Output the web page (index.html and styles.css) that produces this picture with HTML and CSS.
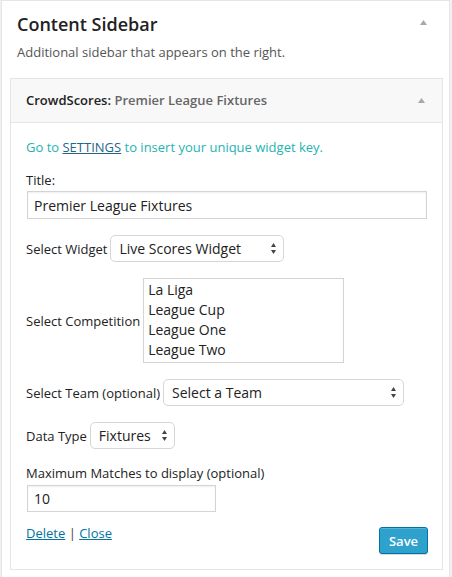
FILE: index.html
```html
<!DOCTYPE html>
<html>
<head>
<meta charset="utf-8">
<link rel="stylesheet" href="styles.css">
</head>
<body>
<div class="sidebar">
  <div class="sidebar-head">
    <h2 class="sidebar-name">Content Sidebar</h2>
    <svg class="toggle" width="7" height="5" viewBox="0 0 7 5"><polygon points="0,5 3.5,0 7,5"/></svg>
  </div>
  <p class="sidebar-desc">Additional sidebar that appears on the right.</p>

  <div class="widget">
    <div class="widget-top">
      <h4 class="widget-title">CrowdScores: <span class="in-title">Premier League Fixtures</span></h4>
      <svg class="toggle toggle-w" width="7" height="5" viewBox="0 0 7 5"><polygon points="0,5 3.5,0 7,5"/></svg>
    </div>
    <div class="widget-inside">
      <p class="notice">Go to <a href="#" class="settings">SETTINGS</a> to insert your unique widget key.</p>

      <label class="field-label">Title:</label>
      <input class="text-input title-input" type="text" value="Premier League Fixtures">

      <div class="row">
        <span class="row-label">Select Widget</span>
        <div class="select w-widget"><span>Live Scores Widget</span><svg class="arrows" width="5" height="11" viewBox="0 0 5 11"><polygon points="0,4 2.5,0 5,4"/><polygon points="0,7 5,7 2.5,11"/></svg></div>
      </div>

      <div class="row">
        <span class="row-label">Select Competition</span>
        <div class="listbox">
          <div class="option">La Liga</div>
          <div class="option">League Cup</div>
          <div class="option">League One</div>
          <div class="option">League Two</div>
        </div>
      </div>

      <div class="row">
        <span class="row-label">Select Team (optional)</span>
        <div class="select w-team"><span>Select a Team</span><svg class="arrows" width="5" height="11" viewBox="0 0 5 11"><polygon points="0,4 2.5,0 5,4"/><polygon points="0,7 5,7 2.5,11"/></svg></div>
      </div>

      <div class="row">
        <span class="row-label">Data Type</span>
        <div class="select w-type"><span>Fixtures</span><svg class="arrows" width="5" height="11" viewBox="0 0 5 11"><polygon points="0,4 2.5,0 5,4"/><polygon points="0,7 5,7 2.5,11"/></svg></div>
      </div>

      <label class="field-label max-label">Maximum Matches to display (optional)</label>
      <input class="text-input max-input" type="text" value="10">

      <div class="actions">
        <div class="links"><a href="#">Delete</a> | <a href="#">Close</a></div>
        <button class="save" type="button">Save</button>
      </div>
    </div>
  </div>
</div>
</body>
</html>
```

FILE: styles.css
```css
html, body {
  margin: 0;
  padding: 0;
}
body {
  background: #f1f1f1;
  font-family: "Open Sans", "Liberation Sans", sans-serif;
  color: #222;
  font-size: 13px;
}
.sidebar {
  box-sizing: border-box;
  margin-left: 1px;
  width: 449px;
  min-height: 600px;
  background: #fff;
  border: 1px solid #e5e5e5;
}
.sidebar-head {
  display: flex;
  justify-content: space-between;
  align-items: flex-start;
  padding: 11px 22px 0 15px;
}
.sidebar-name {
  margin: 0;
  font-size: 18px;
  line-height: 24px;
  font-weight: 600;
  color: #222;
}
.toggle {
  display: block;
  fill: #a5a9ad;
  margin-top: 8px;
}
.toggle-w {
  margin-top: 7px;
}
.sidebar-desc {
  margin: 7px 0 0 15px;
  font-size: 13px;
  line-height: 18px;
  color: #555;
}
.widget {
  margin: 17px 6px 0 8px;
  border: 1px solid #e5e5e5;
  background: #fff;
}
.widget-top {
  display: flex;
  justify-content: space-between;
  align-items: flex-start;
  background: #f8f8f8;
  border-bottom: 1px solid #e5e5e5;
  padding: 12px 17px 13px 15px;
}
.widget-title {
  margin: 0;
  font-size: 13px;
  line-height: 18px;
  font-weight: 600;
  color: #222;
}
.in-title {
  color: #666;
}
.widget-inside {
  padding: 15px 13px 15px 15px;
}
.notice {
  margin: 0;
  line-height: 18px;
  color: #26b3b0;
}
.settings {
  color: #1f6689;
  text-decoration: underline;
}
.field-label {
  display: block;
  margin-top: 15px;
  line-height: 18px;
  color: #222;
}
.text-input {
  display: block;
  box-sizing: border-box;
  margin: 2px 0 0 1px;
  height: 28px;
  padding: 0 6px;
  border: 1px solid #d4d4d4;
  box-shadow: inset 0 1px 2px rgba(0, 0, 0, 0.07);
  font-family: "Open Sans", "Liberation Sans", sans-serif;
  font-size: 14px;
  color: #222;
  background: #fff;
  outline: none;
}
.title-input {
  width: 400px;
}
.max-label {
  margin-top: 15px;
}
.max-input {
  width: 189px;
  height: 27px;
  margin-top: 3px;
}
.row {
  display: flex;
  align-items: center;
  gap: 3px;
  margin-top: 16px;
}
.row-label {
  line-height: 18px;
  color: #222;
}
.select {
  box-sizing: border-box;
  display: flex;
  align-items: center;
  justify-content: space-between;
  height: 27px;
  padding: 0 7px 0 8px;
  border: 1px solid #d6d6d6;
  border-radius: 5px;
  background: #fff;
  font-size: 14px;
  color: #222;
}
.arrows {
  display: block;
  fill: #444;
}
.w-widget {
  width: 174px;
}
.w-team {
  width: 241px;
}
.w-type {
  width: 85px;
}
.listbox {
  box-sizing: border-box;
  width: 201px;
  height: 85px;
  padding: 1px 4px 2px 4px;
  border: 1px solid #d4d4d4;
  background: #fff;
}
.option {
  font-size: 14px;
  line-height: 20px;
  color: #222;
}
.actions {
  display: flex;
  justify-content: space-between;
  align-items: flex-start;
  margin-top: 12px;
}
.links {
  line-height: 18px;
  color: #444;
}
.links a {
  color: #0074a2;
  text-decoration: underline;
}
.save {
  box-sizing: border-box;
  margin: 3px 1px 0 0;
  height: 27px;
  width: 49px;
  padding: 0;
  border: 1px solid #0074a2;
  border-radius: 3px;
  background: #2ea2cc;
  box-shadow: inset 0 1px 0 rgba(120, 200, 230, 0.5), 0 1px 0 rgba(0, 0, 0, 0.15);
  color: #fff;
  font-family: "Open Sans", "Liberation Sans", sans-serif;
  font-size: 13px;
  font-weight: 600;
}
```
